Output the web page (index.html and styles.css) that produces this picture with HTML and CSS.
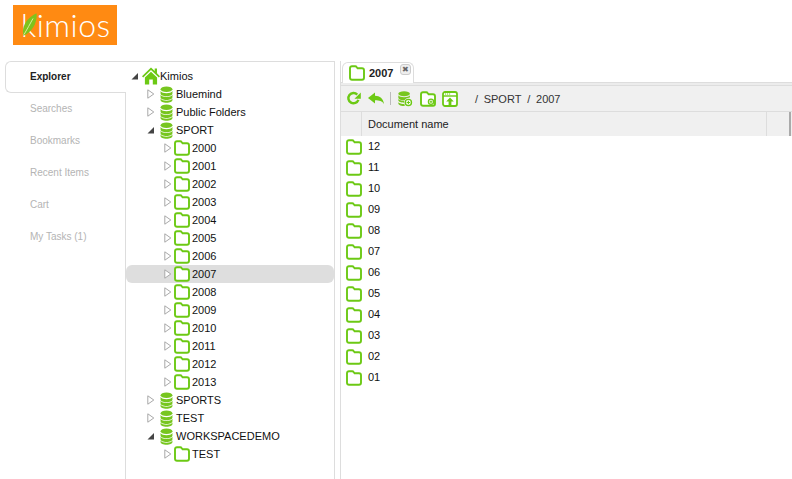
FILE: index.html
```html
<!DOCTYPE html>
<html lang="en">
<head>
<meta charset="utf-8">
<title>Kimios</title>
<link rel="stylesheet" href="styles.css">
</head>
<body>
<svg class="defs" width="0" height="0" aria-hidden="true">
  <symbol id="folder" viewBox="0 0 16 16">
    <path d="M1 3.200C1 2 1.800 1.200 3 1.200h3.200c.8 0 1.200.4 1.600 1l.8 1.100h4.400c1.200 0 2 .8 2 2v7.500c0 1.200-.8 2-2 2H3c-1.200 0-2-.8-2-2z" fill="#fff" stroke="#6cc914" stroke-width="1.900"/>
  </symbol>
  <symbol id="db" viewBox="0 0 14 18">
    <g fill="#77c61f">
      <ellipse cx="7" cy="3.400" rx="6.400" ry="3"/>
      <path d="M.6 5.200C1.600 7 4 7.600 7 7.600s5.400-.6 6.400-2.400v2.600c0 1.800-2.800 3-6.400 3S.6 9.600.6 7.800z"/>
      <path d="M.6 9.400c1 1.800 3.400 2.400 6.400 2.400s5.400-.6 6.400-2.400V12c0 1.800-2.800 3-6.400 3S.6 13.800.6 12z"/>
      <path d="M.6 13.300c1 1.800 3.400 2.400 6.400 2.400s5.400-.6 6.400-2.400v1.500c0 1.800-2.800 3-6.400 3s-6.400-1.200-6.400-3z"/>
    </g>
  </symbol>
  <symbol id="home" viewBox="0 0 18 18">
    <path d="M9 .6 0 9.200l1.200 1.200L9 3.100l7.800 7.300 1.200-1.200-3-2.900V1.500h-2.300v2.600z" fill="#6cc914"/>
    <path d="M9 4.800 2.900 10.500v7h4.300v-5h3.600v5h4.300v-7z" fill="#6cc914"/>
  </symbol>
  <symbol id="open" viewBox="0 0 8 10">
    <path d="M.8.800 6.800 5 .8 9.200z" fill="#fff" stroke="#a8a8a8" stroke-width="1"/>
  </symbol>
  <symbol id="closed" viewBox="0 0 8 10">
    <path d="M7 2v6.500H.5z" fill="#444"/>
  </symbol>
</svg>

<header class="top">
  <div class="logo">
    <span class="logo-text">kimios</span>
    <svg class="leaf" viewBox="0 0 16 23" width="16" height="23" aria-hidden="true">
      <path d="M15.500.3C16.500 8 12.500 18 2.500 22.700.3 15 4.500 5.500 15.500.3z" fill="#7fc31c"/>
      <path d="M12 5.500C9 11 6 16.500 3 21.500" fill="none" stroke="#d6ee9a" stroke-width="1"/>
    </svg>
  </div>
</header>

<main class="workspace">
  <nav class="side">
    <a class="side-item active">Explorer</a>
    <a class="side-item">Searches</a>
    <a class="side-item">Bookmarks</a>
    <a class="side-item">Recent Items</a>
    <a class="side-item">Cart</a>
    <a class="side-item">My Tasks (1)</a>
  </nav>

  <section class="tree">
    <div class="node d0"><svg class="exp"><use href="#closed"/></svg><svg class="ic home"><use href="#home"/></svg><span>Kimios</span></div>
    <div class="node d1"><svg class="exp"><use href="#open"/></svg><svg class="ic dbi"><use href="#db"/></svg><span>Bluemind</span></div>
    <div class="node d1"><svg class="exp"><use href="#open"/></svg><svg class="ic dbi"><use href="#db"/></svg><span>Public Folders</span></div>
    <div class="node d1"><svg class="exp"><use href="#closed"/></svg><svg class="ic dbi"><use href="#db"/></svg><span>SPORT</span></div>
    <div class="node d2"><svg class="exp"><use href="#open"/></svg><svg class="ic fol"><use href="#folder"/></svg><span>2000</span></div>
    <div class="node d2"><svg class="exp"><use href="#open"/></svg><svg class="ic fol"><use href="#folder"/></svg><span>2001</span></div>
    <div class="node d2"><svg class="exp"><use href="#open"/></svg><svg class="ic fol"><use href="#folder"/></svg><span>2002</span></div>
    <div class="node d2"><svg class="exp"><use href="#open"/></svg><svg class="ic fol"><use href="#folder"/></svg><span>2003</span></div>
    <div class="node d2"><svg class="exp"><use href="#open"/></svg><svg class="ic fol"><use href="#folder"/></svg><span>2004</span></div>
    <div class="node d2"><svg class="exp"><use href="#open"/></svg><svg class="ic fol"><use href="#folder"/></svg><span>2005</span></div>
    <div class="node d2"><svg class="exp"><use href="#open"/></svg><svg class="ic fol"><use href="#folder"/></svg><span>2006</span></div>
    <div class="node d2 selected"><svg class="exp"><use href="#open"/></svg><svg class="ic fol"><use href="#folder"/></svg><span>2007</span></div>
    <div class="node d2"><svg class="exp"><use href="#open"/></svg><svg class="ic fol"><use href="#folder"/></svg><span>2008</span></div>
    <div class="node d2"><svg class="exp"><use href="#open"/></svg><svg class="ic fol"><use href="#folder"/></svg><span>2009</span></div>
    <div class="node d2"><svg class="exp"><use href="#open"/></svg><svg class="ic fol"><use href="#folder"/></svg><span>2010</span></div>
    <div class="node d2"><svg class="exp"><use href="#open"/></svg><svg class="ic fol"><use href="#folder"/></svg><span>2011</span></div>
    <div class="node d2"><svg class="exp"><use href="#open"/></svg><svg class="ic fol"><use href="#folder"/></svg><span>2012</span></div>
    <div class="node d2"><svg class="exp"><use href="#open"/></svg><svg class="ic fol"><use href="#folder"/></svg><span>2013</span></div>
    <div class="node d1"><svg class="exp"><use href="#open"/></svg><svg class="ic dbi"><use href="#db"/></svg><span>SPORTS</span></div>
    <div class="node d1"><svg class="exp"><use href="#open"/></svg><svg class="ic dbi"><use href="#db"/></svg><span>TEST</span></div>
    <div class="node d1"><svg class="exp"><use href="#closed"/></svg><svg class="ic dbi"><use href="#db"/></svg><span>WORKSPACEDEMO</span></div>
    <div class="node d2"><svg class="exp"><use href="#open"/></svg><svg class="ic fol"><use href="#folder"/></svg><span>TEST</span></div>
  </section>

  <section class="content">
    <div class="tabs">
      <div class="tab">
        <svg class="ic fol"><use href="#folder"/></svg>
        <b>2007</b>
        <span class="close">✖</span>
      </div>
    </div>
    <div class="toolbar">
      <svg class="tool refresh" viewBox="0 0 16 16" aria-hidden="true">
        <path d="M13.200 9.500A5.500 5.500 0 1 1 12 3.800" fill="none" stroke="#6cc914" stroke-width="2.600"/>
        <path d="M15.800 1.500v6.800H9z" fill="#6cc914"/>
      </svg>
      <svg class="tool back" viewBox="0 0 16 14" aria-hidden="true">
        <path d="M0 6 7 .5v3.300c5 0 8 2.700 9 8.200-2-3-4.500-3.700-9-3.700v3.200z" fill="#6cc914"/>
      </svg>
      <span class="sep"></span>
      <svg class="tool big newdb" viewBox="0 0 16 18" aria-hidden="true">
        <g fill="#77c61f">
          <ellipse cx="7" cy="3" rx="6.500" ry="2.800"/>
          <path d="M.5 4.900c1 1.700 3.500 2.200 6.500 2.200s5.500-.5 6.500-2.200v2.300C10 7.500 8 9 7.400 10.400 4 10.400.5 9.300.5 7.500z"/>
          <path d="M.5 9c1 1.300 3.500 2 6.500 2v2.200c-3 0-6.500-1-6.500-2.700z"/>
          <path d="M.5 12.600c1 1.300 3.500 2 6.700 2l.6 2.300c-3.700 0-7.300-1-7.300-2.900z"/>
        </g>
        <circle cx="11.800" cy="13" r="3.500" fill="#fff" stroke="#6cc914" stroke-width="1.500"/>
        <path d="M11.800 11v4M9.800 13h4" stroke="#6cc914" stroke-width="1.200"/>
      </svg>
      <svg class="tool big" viewBox="0 0 16 16" aria-hidden="true">
        <path d="M1 3.200C1 2 1.800 1.200 3 1.200h3.200c.8 0 1.200.4 1.600 1l.8 1.100h4.400c1.200 0 2 .8 2 2v7.500c0 1.200-.8 2-2 2H3c-1.200 0-2-.8-2-2z" fill="#fff" stroke="#6cc914" stroke-width="1.900"/>
        <circle cx="11" cy="10.800" r="2.600" fill="#fff" stroke="#6cc914" stroke-width="1.300"/>
        <path d="M11 9.400v2.800M9.600 10.800h2.800" stroke="#6cc914" stroke-width="1"/>
      </svg>
      <svg class="tool big" viewBox="0 0 16 16" aria-hidden="true">
        <rect x="1" y="1" width="14" height="14" rx="2" fill="#fff" stroke="#6cc914" stroke-width="1.800"/>
        <path d="M1 5h14" stroke="#6cc914" stroke-width="1.400"/>
        <path d="M3 3h1.200M5 3h1.200M7 3h1.200" stroke="#6cc914" stroke-width="1"/>
        <path d="M8 6.500 11.800 10.500H9.400V15H6.600v-4.500H4.200z" fill="#6cc914"/>
      </svg>
      <div class="crumbs"><i>/</i><span>SPORT</span><i>/</i><span>2007</span></div>
    </div>
    <div class="thead">
      <span class="th-check"></span>
      <span class="th-name">Document name</span>
      <span class="th-end"></span>
    </div>
    <div class="list">
      <div class="row"><svg class="ic fol"><use href="#folder"/></svg><span>12</span></div>
      <div class="row"><svg class="ic fol"><use href="#folder"/></svg><span>11</span></div>
      <div class="row"><svg class="ic fol"><use href="#folder"/></svg><span>10</span></div>
      <div class="row"><svg class="ic fol"><use href="#folder"/></svg><span>09</span></div>
      <div class="row"><svg class="ic fol"><use href="#folder"/></svg><span>08</span></div>
      <div class="row"><svg class="ic fol"><use href="#folder"/></svg><span>07</span></div>
      <div class="row"><svg class="ic fol"><use href="#folder"/></svg><span>06</span></div>
      <div class="row"><svg class="ic fol"><use href="#folder"/></svg><span>05</span></div>
      <div class="row"><svg class="ic fol"><use href="#folder"/></svg><span>04</span></div>
      <div class="row"><svg class="ic fol"><use href="#folder"/></svg><span>03</span></div>
      <div class="row"><svg class="ic fol"><use href="#folder"/></svg><span>02</span></div>
      <div class="row"><svg class="ic fol"><use href="#folder"/></svg><span>01</span></div>
    </div>
  </section>
</main>
</body>
</html>
```
FILE: styles.css
```css
* { box-sizing: border-box; }
html, body { margin: 0; height: 100%; overflow: hidden; }
body {
  background: #fff;
  color: #111;
  font: 11px/18px "Liberation Sans", Arial, sans-serif;
  display: flex;
  flex-direction: column;
}
.defs { position: absolute; }

.top { height: 61px; padding: 5px 0 0 13px; flex: none; }
.logo {
  position: relative;
  width: 104px;
  height: 40px;
  background: #ff8a12;
  overflow: hidden;
}
.logo-text {
  display: block;
  padding-left: 8px;
  color: #fff;
  font: 300 32px/40px Lato, sans-serif;
  letter-spacing: .5px;
}
.leaf { position: absolute; left: 8px; top: 8px; }

.workspace { flex: 1; display: flex; min-height: 0; }

.side { width: 121px; margin-left: 5px; flex: none; display: flex; flex-direction: column; }
.side-item {
  height: 32px;
  padding-left: 25px;
  line-height: 32px;
  font-size: 10px;
  color: #b4b4b4;
  border-right: 1px solid #ddd;
}
.side-item.active {
  color: #222;
  font-weight: bold;
  border: 1px solid #ddd;
  border-right: 0;
  border-radius: 6px 0 0 6px;
  padding-left: 24px;
  line-height: 30px;
  background: #fff;
}
.side::after { content: ""; flex: 1; border-right: 1px solid #ddd; }

.tree {
  width: 209px;
  flex: none;
  border-top: 1px solid #ddd;
  border-right: 1px solid #ddd;
  padding-top: 5px;
}
.node { height: 18px; display: flex; align-items: center; white-space: nowrap; color: #111; }
.node.d0 { padding-left: 5px; }
.node.d1 { padding-left: 21px; }
.node.d2 { padding-left: 38px; }
.node.selected { background: #dedede; border-radius: 6px; }
.exp { width: 8px; height: 10px; flex: none; }
.ic { flex: none; display: block; }
.home { width: 18px; height: 18px; margin: -1px 0 0 3px; }
.dbi { width: 13px; height: 17px; margin: 0 3px 0 5px; }
.fol { width: 16px; height: 16px; }
.node .fol { margin: 0 2px; }

.content {
  flex: 1;
  margin-left: 5px;
  border-left: 1px solid #ddd;
  min-width: 0;
  display: flex;
  flex-direction: column;
}
.tabs {
  height: 24px;
  flex: none;
  padding: 1px 0 0 1px;
  position: relative;
  background: linear-gradient(#fff 0 21px, #ececec 21px);
}
.tabs::after { content: ""; position: absolute; left: 0; right: 0; top: 21px; height: 1px; background: #ddd; }
.tab {
  position: relative;
  z-index: 1;
  width: 72px;
  height: 21px;
  border: 1px solid #ddd;
  border-bottom: 0;
  border-radius: 6px 6px 0 0;
  background: #fff;
  display: flex;
  align-items: center;
  padding-left: 6px;
}
.tab b { margin-left: 4px; color: #222; }
.close {
  position: absolute;
  right: 2px;
  top: 1px;
  width: 11px;
  height: 11px;
  border: 1px solid #ccc;
  border-radius: 3px;
  background: #eee;
  color: #666;
  font-size: 8px;
  line-height: 9px;
  text-align: center;
}
.toolbar {
  height: 27px;
  flex: none;
  background: #f0f0f0;
  border-top: 1px solid #ddd;
  border-bottom: 1px solid #ddd;
  display: flex;
  align-items: center;
  padding-left: 5px;
}
.tool { width: 15px; height: 15px; flex: none; margin-right: 6px; }
.tool.refresh { margin-right: 7px; }
.tool.back { width: 16px; height: 14px; }
.tool.big { width: 16px; height: 16px; }
.tool.newdb { margin-right: 7px; }
.sep { width: 1px; height: 13px; background: #bbb; margin-right: 6px; }
.crumbs { display: flex; align-items: center; margin-left: 11px; color: #333; }
.crumbs i { margin-right: 5.6px; font-style: normal; }
.crumbs span { margin-right: 6px; }

.thead {
  height: 24px;
  flex: none;
  background: #f0f0f0;
  display: flex;
  align-items: center;
  line-height: 24px;
}
.th-check { width: 21px; height: 100%; border-right: 1px solid #ddd; flex: none; }
.th-name { flex: 1; padding-left: 6px; color: #222; height: 100%; }
.th-end { width: 25px; height: 100%; flex: none; border-left: 1px solid #ddd; border-right: 2px solid #aaa; margin-right: 1px; }

.list { flex: 1; }
.row { height: 21px; display: flex; align-items: center; padding-left: 5px; }
.row .fol { margin-right: 6px; }
.row span { margin-top: -1px; }
```
